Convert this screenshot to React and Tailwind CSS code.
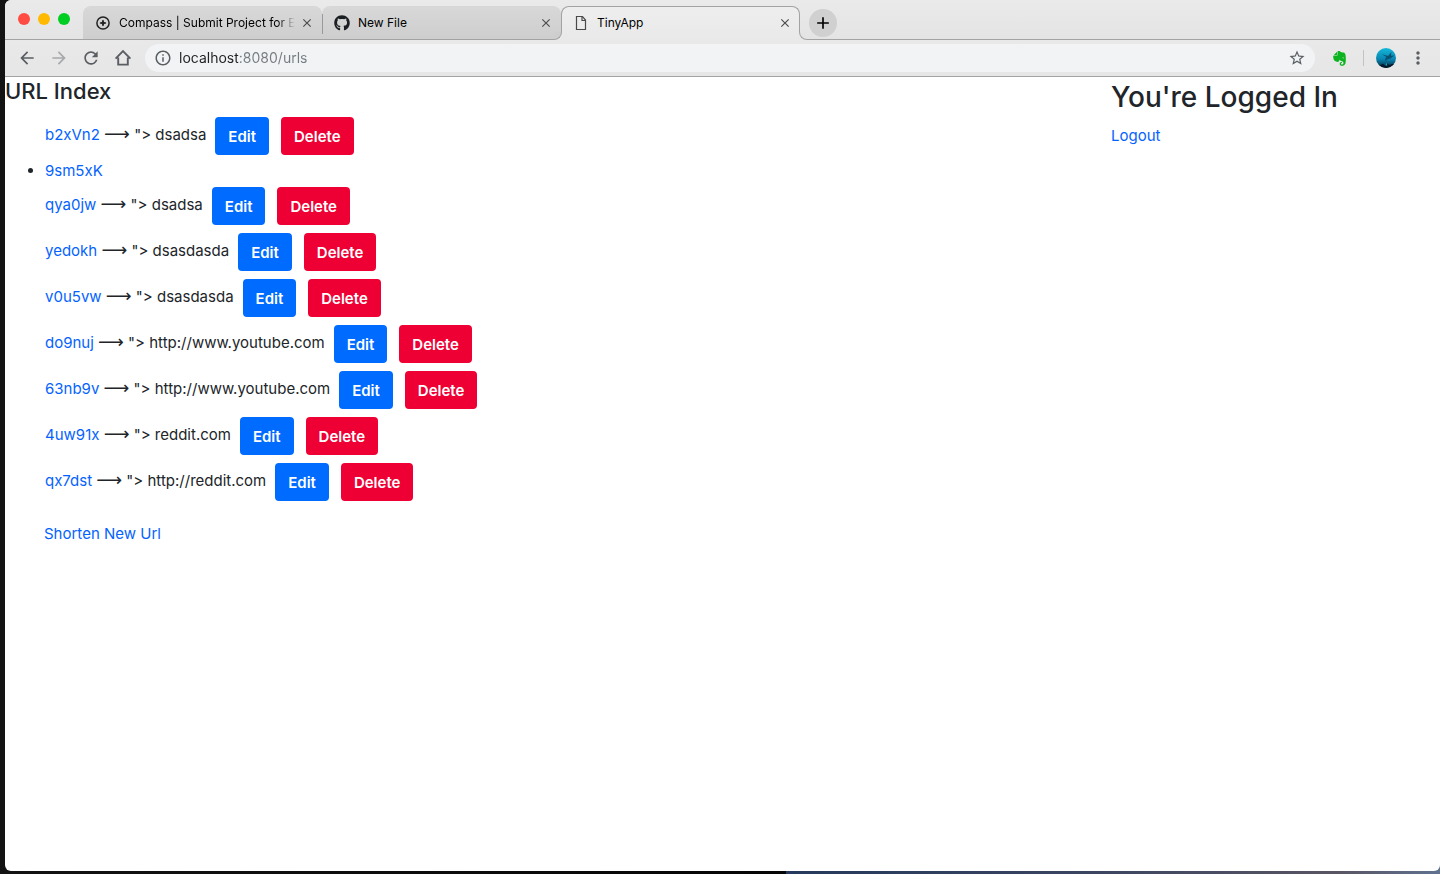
import { FaGithub, FaEvernote } from "react-icons/fa";
import {
  MdAdd,
  MdArrowBack,
  MdArrowForward,
  MdClose,
  MdInfoOutline,
  MdMoreVert,
  MdRefresh,
  MdStarBorder,
} from "react-icons/md";

const urls = [
  { id: "b2xVn2", target: "dsadsa" },
  { id: "9sm5xK" },
  { id: "qya0jw", target: "dsadsa" },
  { id: "yedokh", target: "dsasdasda" },
  { id: "v0u5vw", target: "dsasdasda" },
  { id: "do9nuj", target: "http://www.youtube.com" },
  { id: "63nb9v", target: "http://www.youtube.com" },
  { id: "4uw91x", target: "reddit.com" },
  { id: "qx7dst", target: "http://reddit.com" },
];

function CompassIcon() {
  return (
    <svg viewBox="0 0 16 16" className="size-4" fill="none" stroke="#222" aria-hidden="true">
      <circle cx="8" cy="8" r="6.1" strokeWidth="1.5" />
      <path d="M8 4.4 9.1 6.9 11.6 8 9.1 9.1 8 11.6 6.9 9.1 4.4 8 6.9 6.9Z" fill="#222" stroke="none" />
      <path d="M8 5v6M5 8h6" strokeWidth="1" />
    </svg>
  );
}

function FileIcon() {
  return (
    <svg viewBox="0 0 16 16" className="size-4" fill="none" stroke="#4a4a4a" aria-hidden="true">
      <path d="M3.5 1.5h6l3 3.5v9.5h-9z" strokeWidth="1.2" />
      <path d="M9 1.5V5.5h3.5" strokeWidth="1.2" />
    </svg>
  );
}

function HomeIcon() {
  return (
    <svg viewBox="0 0 18 18" className="size-[18px]" fill="none" stroke="#5a5e63" strokeWidth="1.9" aria-hidden="true">
      <path d="M1.6 9.6 9 2.2l7.4 7.4M4.2 8.4v7.2h9.6V8.4" />
    </svg>
  );
}

function Avatar() {
  return (
    <svg viewBox="0 0 20 20" className="size-5" aria-hidden="true">
      <defs>
        <linearGradient id="sea" x1="0" y1="0" x2="0" y2="1">
          <stop offset="0" stopColor="#14b8d8" />
          <stop offset="0.55" stopColor="#0a86b2" />
          <stop offset="1" stopColor="#03283f" />
        </linearGradient>
        <clipPath id="disc">
          <circle cx="10" cy="10" r="10" />
        </clipPath>
      </defs>
      <g clipPath="url(#disc)">
        <rect width="20" height="20" fill="url(#sea)" />
        <path d="M6 6.2 12 8 15.4 4 15 7.8 18.4 7.4 14.4 10.6 11 11.4 9.4 13.4 9.2 10.8 10.4 9Z" fill="#075173" />
        <path d="M0 20v-4l4 1.2 3-1.4 2 1.6 2.4-2 2 1.6 3-1.2 3.6 1V20Z" fill="#021a2b" />
        <path d="M9.4 17.6l1-2.8 1 2.8Z" fill="#1ba9c8" />
      </g>
    </svg>
  );
}

function Tab({ icon, title, active, fade, className }) {
  return (
    <div
      className={
        "relative flex min-w-0 shrink basis-[239px] items-center rounded-t-lg " +
        (active
          ? "-mb-px border border-b-0 border-[#a3a3a3] bg-linear-to-b from-[#eeeeee] to-[#e9e9e9] pr-[6px] pb-px pl-[11px] "
          : "bg-linear-to-b from-[#d8d8d8] to-[#cecece] pr-[7px] pl-3 ") +
        (className || "")
      }
    >
      <button type="button" className="flex min-w-0 flex-1 items-center gap-2 text-left text-[12px] leading-4 text-black">
        <span className="flex size-4 shrink-0 items-center justify-center">{icon}</span>
        <span className={"min-w-0 flex-1 whitespace-nowrap " + (fade ? "mask-r-from-90% mask-r-to-100%" : "")}>
          {title}
        </span>
      </button>
      <button type="button" aria-label={"Close " + title} className="ml-1 flex size-4 shrink-0 items-center justify-center text-[#4c4c4c]">
        <MdClose size={14} />
      </button>
      {active && (
        <>
          <span className="absolute right-full bottom-0 size-2 bg-[#e9e9e9]">
            <span className="block size-2 rounded-br-lg border-r border-b border-[#a3a3a3] bg-[#cecece]" />
          </span>
          <span className="absolute bottom-0 left-full size-2 bg-[#e9e9e9]">
            <span className="block size-2 rounded-bl-lg border-b border-l border-[#a3a3a3] bg-[#e4e4e4]" />
          </span>
        </>
      )}
    </div>
  );
}

function NavButton({ label, className, children }) {
  return (
    <button type="button" aria-label={label} className={"flex h-7 w-8 shrink-0 items-center justify-center text-[#5a5e63] " + (className || "")}>
      {children}
    </button>
  );
}

function BrowserChrome() {
  return (
    <header className="rounded-tl-md bg-[#e7e7e7]">
      <div className="flex h-10 rounded-tl-md border-b border-[#a3a3a3] bg-linear-to-b from-[#eaeaea] to-[#e4e4e4] pt-[6px]">
        <div className="flex shrink-0 items-start gap-2 pt-[7px] pr-[13px] pl-[13px]">
          <button type="button" aria-label="Close window" className="size-3 rounded-full bg-[#ff4b42]" />
          <button type="button" aria-label="Minimize window" className="size-3 rounded-full bg-[#ffba00]" />
          <button type="button" aria-label="Zoom window" className="size-3 rounded-full bg-[#00ce22]" />
        </div>
        <Tab icon={<CompassIcon />} title="Compass | Submit Project for E" fade />
        <Tab
          icon={<FaGithub size={16} color="#1b1f23" />}
          title="New File"
          className="before:absolute before:top-2 before:left-0 before:h-5 before:w-px before:bg-[#999999]"
        />
        <Tab icon={<FileIcon />} title="TinyApp" active />
        <button
          type="button"
          aria-label="New tab"
          className="mt-[3px] ml-[9px] flex size-7 shrink-0 items-center justify-center rounded-full bg-[#d0d0d0] text-black"
        >
          <MdAdd size={20} />
        </button>
      </div>
      <div className="flex items-center border-b border-[#a3a3a3] bg-linear-to-b from-[#e9e9e9] to-[#e6e6e6] px-[6px] py-1">
        <NavButton label="Back"><MdArrowBack size={20} /></NavButton>
        <NavButton label="Forward" className="opacity-45"><MdArrowForward size={20} /></NavButton>
        <NavButton label="Reload"><MdRefresh size={20} /></NavButton>
        <NavButton label="Home"><HomeIcon /></NavButton>
        <div className="ml-[6px] flex h-7 min-w-0 flex-1 items-center rounded-full bg-[#f1f3f4] pr-[9px] pl-[9px] text-[#5a5e63]">
          <MdInfoOutline size={18} className="shrink-0" />
          <input
            type="text"
            aria-label="Address"
            defaultValue="localhost:8080/urls"
            className="ml-[7px] min-w-0 flex-1 bg-linear-to-r from-[#202124] from-[59px] to-[#757b80] to-[59px] bg-clip-text text-[14px] leading-5 text-transparent outline-none"
          />
          <button type="button" aria-label="Bookmark this page" className="shrink-0">
            <MdStarBorder size={18} />
          </button>
        </div>
        <NavButton label="Evernote" className="ml-2"><FaEvernote size={17} color="#0bb31e" /></NavButton>
        <span className="ml-2 h-4 w-px bg-[#c3c3c3]" />
        <button type="button" aria-label="Profile" className="ml-3 shrink-0"><Avatar /></button>
        <NavButton label="Menu" className="ml-[6px]"><MdMoreVert size={20} /></NavButton>
      </div>
    </header>
  );
}

function UrlRow({ id, target }) {
  const link = (
    <a href={"#" + id} className="text-[#0463ff]">
      {id}
    </a>
  );
  if (!target) {
    return <li className="list-disc">{link}</li>;
  }
  return (
    <li className="flex items-start py-1">
      <p className="leading-9 whitespace-nowrap">
        {link} <span className="font-['DejaVu_Sans',sans-serif] text-[18px] leading-none">⟶</span> {'">'} {target}
      </p>
      <button type="button" className="ml-[9px] rounded bg-[#006bff] px-[13px] pt-2 pb-[6px] leading-6 font-semibold text-white">
        Edit
      </button>
      <button type="button" className="ml-3 rounded bg-[#ee0034] px-[13px] pt-2 pb-[6px] leading-6 font-semibold text-white">
        Delete
      </button>
    </li>
  );
}

export default function App() {
  return (
    <div className="flex min-h-screen flex-col bg-[linear-gradient(to_right,#131313_0,#050505_54.6%,#24395c_54.6%,#3a4560_75%,#595564_93%,#5f7290_100%)] pb-[3px] pl-[5px] font-['Inter',sans-serif]">
      <BrowserChrome />
      <main className="flex flex-1 items-start justify-between rounded-b-md bg-white text-[15px] leading-6 text-[#212529]">
        <section>
          <h2 className="pb-[7px] text-[22px] leading-[29px] font-medium">URL Index</h2>
          <ul className="pl-10">
            {urls.map((url) => (
              <UrlRow key={url.id} {...url} />
            ))}
          </ul>
          <a href="#new" className="mt-[17px] ml-[39px] inline-block text-[#0463ff]">
            Shorten New Url
          </a>
        </section>
        <aside className="w-[329px] shrink-0">
          <h1 className="pt-px pb-2 text-[28px] leading-[38px] font-medium whitespace-nowrap">You're Logged In</h1>
          <a href="#logout" className="text-[#0463ff]">
            Logout
          </a>
        </aside>
      </main>
    </div>
  );
}
